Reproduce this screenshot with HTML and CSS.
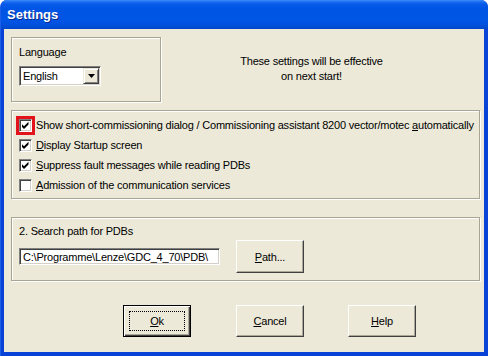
FILE: index.html
```html
<!DOCTYPE html>
<html>
<head>
<meta charset="utf-8">
<title>Settings</title>
<link rel="stylesheet" href="styles.css">
</head>
<body>
<div class="window">
  <div class="titlebar"><span class="title">Settings</span></div>
  <div class="client">
    <div class="top-row">
      <div class="group lang">
        <div class="label">Language</div>
        <div class="combo">
          <span class="combo-text">English</span>
          <span class="combo-btn"><svg width="7" height="4" viewBox="0 0 7 4"><path d="M0 0H7L3.5 4Z" fill="#000"/></svg></span>
        </div>
      </div>
      <div class="notice">These settings will be effective<br>on next start!</div>
    </div>

    <div class="group options">
      <div class="check-row">
        <span class="checkbox"><svg width="9" height="9" viewBox="0 0 9 9"><path d="M1 3.2L3 5.2L7.5 0.8V3.6L3 8L1 6Z" fill="#000"/></svg><span class="highlight"></span></span>
        <span class="check-text">Show short-commissioning dialog / Commissioning assistant 8200 vector/motec <u>a</u>utomatically</span>
      </div>
      <div class="check-row">
        <span class="checkbox"><svg width="9" height="9" viewBox="0 0 9 9"><path d="M1 3.2L3 5.2L7.5 0.8V3.6L3 8L1 6Z" fill="#000"/></svg></span>
        <span class="check-text"><u>D</u>isplay Startup screen</span>
      </div>
      <div class="check-row">
        <span class="checkbox"><svg width="9" height="9" viewBox="0 0 9 9"><path d="M1 3.2L3 5.2L7.5 0.8V3.6L3 8L1 6Z" fill="#000"/></svg></span>
        <span class="check-text"><u>S</u>uppress fault messages while reading PDBs</span>
      </div>
      <div class="check-row">
        <span class="checkbox"></span>
        <span class="check-text"><u>A</u>dmission of the communication services</span>
      </div>
    </div>

    <div class="group pathgroup">
      <div class="label">2. Search path for PDBs</div>
      <div class="path-row">
        <div class="textbox">C:\Programme\Lenze\GDC_4_70\PDB\</div>
        <div class="btn btn-path"><span><u>P</u>ath...</span></div>
      </div>
    </div>

    <div class="buttons">
      <div class="btn btn-default"><span class="focus"><u>O</u>k</span></div>
      <div class="btn btn-cancel"><span><u>C</u>ancel</span></div>
      <div class="btn btn-help"><span><u>H</u>elp</span></div>
    </div>
  </div>
</div>
</body>
</html>
```

FILE: styles.css
```css
html, body {
  margin: 0;
  padding: 0;
}
body {
  width: 488px;
  height: 356px;
  overflow: hidden;
  background: #ffffff;
  font-family: "Liberation Sans", Arial, sans-serif;
  font-size: 11px;
  letter-spacing: -0.2px;
  color: #000;
}
.window {
  width: 488px;
  height: 356px;
  box-sizing: border-box;
  display: flex;
  flex-direction: column;
  background: #0842D6;
  border-radius: 7px 7px 0 0;
  overflow: hidden;
  border-left: 1px solid #1D5EE8;
}
.titlebar {
  height: 29px;
  flex: none;
  display: flex;
  align-items: center;
  padding-left: 6px;
  background: linear-gradient(to bottom,
    #3B8CF8 0px, #1B6DF0 2px, #0A5CE8 4px, #0055E5 8px,
    #0055E5 20px, #0050DD 25px, #0046C8 29px);
}
.title {
  color: #fff;
  font-weight: bold;
  font-size: 13px;
  letter-spacing: 0;
  text-shadow: 1px 1px 0 #0A2A8A;
  margin-top: -1px;
}
.client {
  flex: 1;
  margin: 0 4px 4px 3px;
  background: #ECE9D8;
  padding: 8px 4px 0 7px;
}
.group {
  box-sizing: border-box;
  border: 1px solid #A8A593;
  box-shadow: 1px 1px 0 #fff, inset 1px 1px 0 #fff;
}
.top-row {
  display: flex;
  height: 65px;
}
.lang {
  width: 150px;
  height: 65px;
  padding: 8px 0 0 7px;
}
.label {
  line-height: 13px;
  height: 13px;
}
.combo {
  margin-top: 7px;
  width: 82px;
  height: 20px;
  box-sizing: border-box;
  background: #fff;
  border: 1px solid;
  border-color: #808080 #fff #fff #808080;
  box-shadow: inset 1px 1px 0 #404040, inset -1px -1px 0 #D4D0C8;
  display: flex;
  align-items: center;
  padding: 1px;
}
.combo-text {
  flex: 1;
  padding-left: 2px;
  line-height: 16px;
}
.combo-btn {
  width: 16px;
  height: 16px;
  box-sizing: border-box;
  background: #ECE9D8;
  border: 1px solid;
  border-color: #ECE9D8 #404040 #404040 #ECE9D8;
  box-shadow: inset 1px 1px 0 #fff, inset -1px -1px 0 #808080;
  display: flex;
  align-items: center;
  justify-content: center;
}
.notice {
  flex: 1;
  text-align: center;
  padding: 17px 18px 0 0;
  line-height: 15px;
}
.options {
  margin-top: 8px;
  width: 469px;
  height: 89px;
  padding: 4px 0 0 7px;
}
.check-row {
  display: flex;
  align-items: center;
  height: 20px;
}
.checkbox {
  position: relative;
  width: 13px;
  height: 13px;
  box-sizing: border-box;
  flex: none;
  background: #fff;
  border: 1px solid;
  border-color: #808080 #fff #fff #808080;
  box-shadow: inset 1px 1px 0 #404040, inset -1px -1px 0 #D4D0C8;
  display: flex;
  align-items: center;
  justify-content: center;
  margin-right: 4px;
}
.checkbox svg {
  display: block;
}
.highlight {
  position: absolute;
  left: -4px;
  top: -4px;
  width: 13px;
  height: 13px;
  border: 3px solid #E2131B;
}
.check-text {
  white-space: nowrap;
  line-height: 13px;
}
.pathgroup {
  margin-top: 18px;
  width: 469px;
  height: 64px;
  padding: 7px 0 0 7px;
}
.path-row {
  display: flex;
  align-items: center;
  margin-top: 2px;
}
.textbox {
  width: 201px;
  height: 17px;
  box-sizing: border-box;
  background: #fff;
  border: 1px solid;
  border-color: #808080 #fff #fff #808080;
  box-shadow: inset 1px 1px 0 #404040, inset -1px -1px 0 #D4D0C8;
  padding: 1px 0 0 3px;
  line-height: 14px;
  white-space: nowrap;
  overflow: hidden;
}
.btn {
  width: 68px;
  height: 32px;
  box-sizing: border-box;
  background: #ECE9D8;
  border: 1px solid;
  border-color: #fff #404040 #404040 #fff;
  box-shadow: inset -1px -1px 0 #ACA899;
  display: flex;
  align-items: center;
  justify-content: center;
}
.btn-path {
  margin-left: 16px;
  height: 33px;
}
.buttons {
  display: flex;
  margin-top: 24px;
  padding-left: 112px;
}
.btn-default {
  border: 1px solid #000;
  box-shadow: inset 1px 1px 0 #fff, inset -1px -1px 0 #404040, inset -2px -2px 0 #ACA899;
}
.focus {
  width: 56px;
  height: 20px;
  box-sizing: border-box;
  border: 1px dotted #000;
  display: flex;
  align-items: center;
  justify-content: center;
}
.btn-cancel {
  margin-left: 45px;
}
.btn-help {
  margin-left: 44px;
}
```
